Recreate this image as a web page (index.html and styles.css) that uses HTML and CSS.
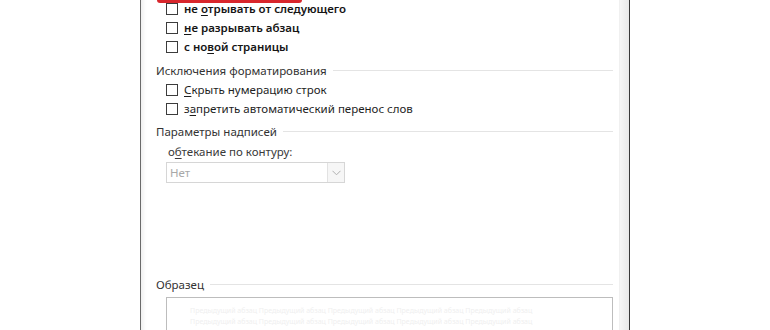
FILE: index.html
```html
<!DOCTYPE html>
<html lang="ru">
<head>
<meta charset="utf-8">
<link rel="stylesheet" href="styles.css">
</head>
<body>
<div class="page">
  <div class="gutter"></div>
  <div class="dialog">
    <div class="content">
      <div class="highlight"></div>
      <div class="group first">
        <label class="check bold"><span class="box"></span><span>не <u>о</u>трывать от следующего</span></label>
        <label class="check bold"><span class="box"></span><span><u>н</u>е разрывать абзац</span></label>
        <label class="check bold"><span class="box"></span><span>с но<u>в</u>ой страницы</span></label>
      </div>
      <div class="section s-exc"><span>Исключения форматирования</span><i class="rule"></i></div>
      <div class="group">
        <label class="check"><span class="box"></span><span><u>С</u>крыть нумерацию строк</span></label>
        <label class="check"><span class="box"></span><span>з<u>а</u>претить автоматический перенос слов</span></label>
      </div>
      <div class="section s-txt"><span>Параметры надписей</span><i class="rule"></i></div>
      <div class="field">
        <div class="field-label">о<u>б</u>текание по контуру:</div>
        <div class="select">
          <span class="value">Нет</span>
          <span class="arrow"><svg width="9" height="6" viewBox="0 0 9 6"><path d="M0.5 0.8 L4.5 4.8 L8.5 0.8" fill="none" stroke="#b0b0b0" stroke-width="1"/></svg></span>
        </div>
      </div>
      <div class="section s-sample"><span>Образец</span><i class="rule"></i></div>
      <div class="preview">
        <p>Предыдущий абзац Предыдущий абзац Предыдущий абзац Предыдущий абзац Предыдущий абзац</p>
        <p>Предыдущий абзац Предыдущий абзац Предыдущий абзац Предыдущий абзац Предыдущий абзац</p>
      </div>
    </div>
    <div class="band"></div>
  </div>
</div>
</body>
</html>
```
FILE: styles.css
```css
* { box-sizing: border-box; }
html, body {
  margin: 0;
  padding: 0;
  background: #ffffff;
  width: 770px;
  height: 330px;
  overflow: hidden;
}
body {
  font-family: "Noto Sans", "Open Sans", sans-serif;
  font-size: 11.5px;
  color: #2b2b2b;
}
.page {
  display: flex;
  height: 330px;
}
.gutter {
  width: 140px;
  flex: none;
}
.dialog {
  width: 490px;
  flex: none;
  display: flex;
  border-left: 1px solid #6a6a6a;
  border-right: 1px solid #3a3a3a;
  height: 330px;
  position: relative;
}
.content {
  flex: 1;
  position: relative;
  padding-left: 15px;
  padding-right: 6px;
  box-shadow: inset 6px 0 4px -4px #ececec;
}
.band {
  width: 10px;
  flex: none;
  background: linear-gradient(to right, #f7f7f7, #e9e9e9);
  border-left: 1px solid #f0f0f0;
}
.highlight {
  position: absolute;
  left: 16px;
  top: 0;
  width: 145px;
  height: 3px;
  background: #d8262c;
  border-bottom-left-radius: 3px;
  border-bottom-right-radius: 3px;
}
.group {
  display: flex;
  flex-direction: column;
  padding-left: 10px;
}
.group.first {
  margin-top: -1px;
}
.check {
  display: flex;
  align-items: center;
  height: 19px;
  gap: 6px;
  color: #1e1e1e;
  white-space: nowrap;
}
.check.bold {
  font-weight: 600;
  color: #151515;
}
.check u, .field-label u {
  text-decoration-thickness: 1px;
  text-underline-offset: 2px;
}
.box {
  width: 12px;
  height: 12px;
  border: 1px solid #3c3c3c;
  background: #fff;
  flex: none;
}
.section {
  display: flex;
  align-items: center;
  height: 16px;
  gap: 6px;
  color: #333;
  white-space: nowrap;
}
.rule {
  flex: 1;
  height: 1px;
  background: #e4e4e4;
}
.s-exc { margin-top: 6px; margin-bottom: 2px; }
.s-txt { margin-top: 5px; }
.field {
  padding-left: 12px;
  margin-top: 5px;
}
.field-label {
  height: 16px;
  line-height: 16px;
  color: #3a3a3a;
}
.select {
  margin-top: 2px;
  margin-left: -2px;
  width: 179px;
  height: 21px;
  border: 1px solid #d6d6d6;
  display: flex;
  background: #fff;
}
.value {
  flex: 1;
  color: #a8a8a8;
  padding-left: 3px;
  line-height: 19px;
}
.arrow {
  width: 17px;
  border-left: 1px solid #e2e2e2;
  background: #f6f6f6;
  display: flex;
  align-items: center;
  justify-content: center;
}
.s-sample { margin-top: 93px; }
.preview {
  margin-top: 5px;
  margin-left: 10px;
  height: 40px;
  border: 1px solid #bdbdbd;
  border-bottom: none;
  padding: 7px 0 0 23px;
}
.preview p {
  margin: 0;
  font-size: 7px;
  line-height: 11px;
  color: #efefef;
  white-space: nowrap;
}
```
